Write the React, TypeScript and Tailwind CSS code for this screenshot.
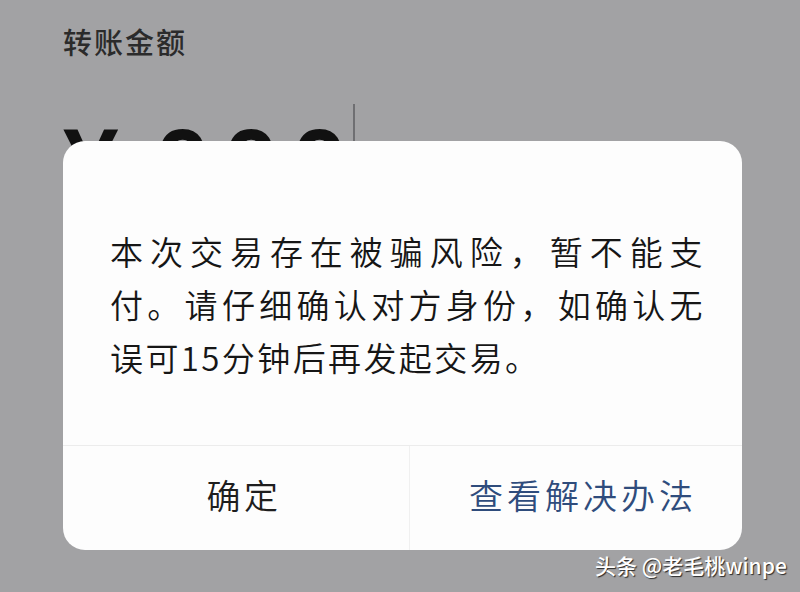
import React from "react";

const cjk = '"Noto Sans CJK SC", "Noto Sans", sans-serif';

export default function App() {
  return (
    <div
      className="relative w-[800px] h-[592px] overflow-hidden bg-[#a2a2a4]"
      style={{ fontFamily: cjk }}
    >
      {/* Transfer amount page behind the modal */}
      <div className="pl-[63px] pt-[22px]">
        <div className="text-[29px] leading-[38px] tracking-[2px] text-[#2b2b2b] font-medium">
          转账金额
        </div>
        <div className="flex items-start mt-[54px] h-[120px]">
          <span
            className="text-[100px] leading-none font-bold text-[#111]"
            style={{ fontFamily: '"Liberation Sans", Arial, sans-serif' }}
          >
            ¥
          </span>
          <span
            className="ml-[36px] text-[100px] leading-none font-bold text-[#111] tracking-[13px]"
            style={{ fontFamily: '"Liberation Sans", Arial, sans-serif' }}
          >
            000
          </span>
          <span className="-ml-[7px] -mt-[10px] w-[2px] h-[60px] bg-[#6f6f72]" />
        </div>
      </div>

      {/* Risk warning dialog */}
      <div className="absolute left-[63px] top-[141px] w-[679px] h-[409px] rounded-[22px] bg-[#fdfdfd] flex flex-col">
        <div className="h-[304px] pl-[47px] pt-[84px]">
          <div className="w-[595px] text-[33px] leading-[53px] tracking-[2.4px] font-[350] text-[#161616]">
            <div className="text-justify [text-align-last:justify]">本次交易存在被骗风险，暂不能支</div>
            <div className="text-justify [text-align-last:justify]">付。请仔细确认对方身份，如确认无</div>
            <div>误可15分钟后再发起交易。</div>
          </div>
        </div>
        <div className="flex flex-1 border-t border-[#ececec]">
          <div className="w-[347px] flex items-center justify-center pb-[8px] pl-[16px] text-[34px] tracking-[3.5px] font-[350] text-[#1e1e1e] border-r border-[#f0f0f0]">
            确定
          </div>
          <div className="flex-1 flex items-center justify-center pb-[8px] pl-[14px] text-[34px] tracking-[4px] font-[350] text-[#2f4c7c]">
            查看解决办法
          </div>
        </div>
      </div>

      {/* Watermark */}
      <div className="absolute left-[595px] top-[550px] text-[21px] leading-[30px] font-medium text-white [text-shadow:1px_1px_1px_#2a2a2a]">
        头条 @老毛桃winpe
      </div>
    </div>
  );
}
